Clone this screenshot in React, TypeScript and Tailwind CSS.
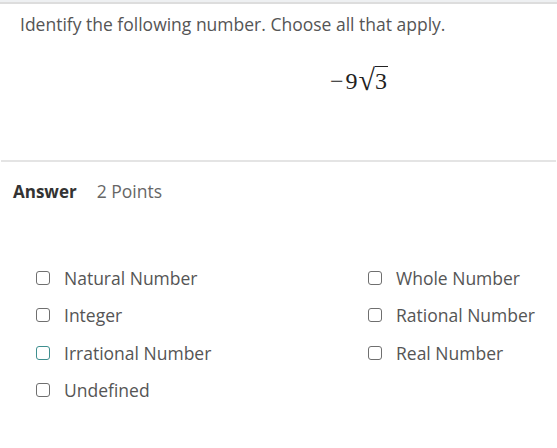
const options = [
  { label: "Natural Number", focused: false },
  { label: "Whole Number", focused: false },
  { label: "Integer", focused: false },
  { label: "Rational Number", focused: false },
  { label: "Irrational Number", focused: true },
  { label: "Real Number", focused: false },
  { label: "Undefined", focused: false },
];

function Checkbox({ focused }: { focused: boolean }) {
  return (
    <span
      className={
        "block w-[14px] h-[14px] rounded-[3px] border-[1.5px] bg-white shrink-0 " +
        (focused ? "border-[#3f8f8f]" : "border-[#6f6f6f]")
      }
    />
  );
}

export default function App() {
  return (
    <div
      className="w-[557px] h-[448px] bg-white text-[#555] overflow-hidden"
      style={{ fontFamily: '"Open Sans", sans-serif' }}
    >
      {/* top strip */}
      <div className="h-[4px] bg-[#eef0f2] border-b-2 border-[#dddddd]" />

      <div className="px-[20px] pt-[8px] h-[156px]">
        <p className="text-[17.5px] leading-[24px] text-[#555]">
          Identify the following number. Choose all that apply.
        </p>
        {/* math expression */}
        <div className="flex pl-[310px] pt-[29px]">
          <span
            className="text-[24px] text-[#222] flex items-end"
            style={{ fontFamily: '"Liberation Serif", serif' }}
          >
            <span className="leading-[22px] mb-[3px]">−</span>
            <span className="leading-[22px] mb-[3px] ml-[2px]">9</span>
            <span className="ml-[1px] text-[30px] leading-[30px]">√</span>
            <span className="border-t-[1.5px] border-[#222] leading-[22px] pt-[3px] mb-[3px] pr-[1px]">
              3
            </span>
          </span>
        </div>
      </div>

      <div className="mx-[1px] h-[2px] bg-[#e4e4e4]" />

      <div className="flex items-baseline gap-[20px] pl-[13px] pt-[16px]">
        <span className="text-[17px] font-bold text-[#333]">Answer</span>
        <span className="text-[17.5px] text-[#666]">2 Points</span>
      </div>

      <div className="grid grid-cols-[332px_1fr] pl-[36px] pt-[61px] gap-y-[13.6px]">
        {options.map((o) => (
          <label key={o.label} className="flex items-center gap-[14px] h-[24px]">
            <Checkbox focused={o.focused} />
            <span className="text-[17.5px] leading-[24px] text-[#555]">{o.label}</span>
          </label>
        ))}
      </div>
    </div>
  );
}
